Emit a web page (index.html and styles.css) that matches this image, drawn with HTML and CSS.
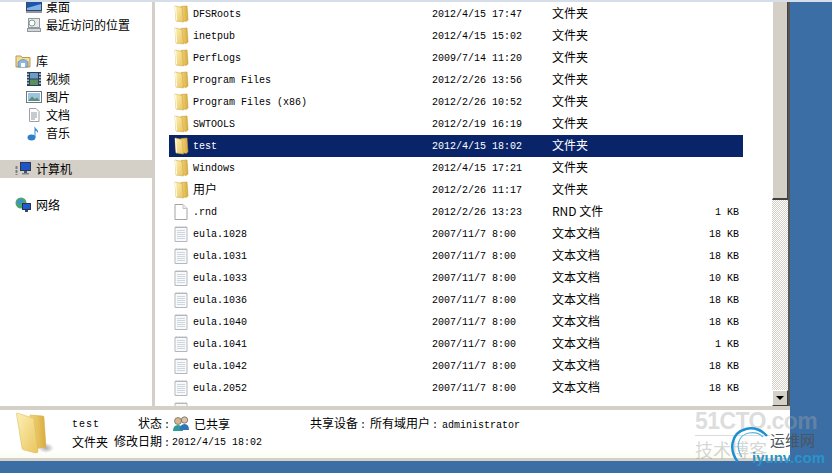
FILE: index.html
```html
<!DOCTYPE html>
<html lang="zh-CN">
<head>
<meta charset="utf-8">
<title>计算机</title>
<link rel="stylesheet" href="styles.css">
</head>
<body>
<svg class="defs" width="0" height="0">
  <defs>
    <linearGradient id="fb" x1="0" y1="0" x2="1" y2="0"><stop offset="0" stop-color="#f3d679"/><stop offset="1" stop-color="#d9ab3f"/></linearGradient>
    <linearGradient id="ff" x1="0" y1="0" x2="1" y2="1"><stop offset="0" stop-color="#fdf0b4"/><stop offset="1" stop-color="#e9c55f"/></linearGradient>
    <symbol id="folder" viewBox="0 0 16 18">
      <path d="M8 1.500 L14 1 L15 15 L13 16.500 L8 15z" fill="url(#fb)" stroke="#c49a38" stroke-width=".6"/>
      <path d="M2 1 L9 2.500 L10.500 17 L3 16z" fill="url(#ff)" stroke="#cfa94a" stroke-width=".6"/>
      <path d="M2.500 1.500 L3.500 15.500" stroke="#fffbe4" stroke-width="1.200"/>
    </symbol>
    <symbol id="blank" viewBox="0 0 16 18">
      <path d="M2 1.500 H10 L14 5.500 V16.500 H2z" fill="#fff" stroke="#a4a4a4"/>
      <path d="M10 1.500 V5.500 H14" fill="#eee" stroke="#c4c4c4"/>
    </symbol>
    <symbol id="doc" viewBox="0 0 16 18">
      <path d="M2 2.500 H14 V16.500 H2z" fill="#f8f9fb" stroke="#b4b8bc"/>
      <path d="M2 2.500 l1.500 -1.500 1.500 1.500 1.500 -1.500 1.500 1.500 1.500 -1.500 1.500 1.500 1.500 -1.500 1.500 1.500" fill="none" stroke="#b4b8bc" stroke-width=".7"/>
      <path d="M4 5.500 H12 M4 7.500 H12 M4 9.500 H12 M4 11.500 H12 M4 13.500 H12" stroke="#ced6e0"/>
    </symbol>
  </defs>
</svg>

<div class="screen">
  <div class="top-strip"></div>
  <div class="desk-row">
    <div class="window">
      <div class="panes">
        <nav class="sidebar">
          <div class="nav-group">
            <div class="nav-row child">
              <svg class="nav-icon" viewBox="0 0 16 16"><rect x="0.500" y="1.500" width="15" height="10" fill="#1f56a8" stroke="#39475c"/><path d="M1 9 L15 5 V11 H1z" fill="#7fb2e8"/><rect x="0" y="12" width="16" height="2" fill="#8d99a8"/></svg>
              <span>桌面</span>
            </div>
            <div class="nav-row child">
              <svg class="nav-icon" viewBox="0 0 16 16"><rect x="2.500" y="1.500" width="11" height="9" fill="#e8e8e8" stroke="#8f9aa0"/><circle cx="6" cy="6" r="3" fill="#fff" stroke="#7f9c8c"/><rect x="1.500" y="11.500" width="13" height="3" fill="#d4d8d8" stroke="#8f9aa0"/></svg>
              <span>最近访问的位置</span>
            </div>
          </div>
          <div class="nav-group">
            <div class="nav-row parent">
              <svg class="nav-icon" viewBox="0 0 16 16"><path d="M1 3 H6 L7 4.500 H15 V14 H1z" fill="#f3dc96" stroke="#b99b53"/><path d="M3 14 V9 Q8 4 13 9 V14z" fill="#8db8dc" stroke="#5d88ad" stroke-width=".7"/><rect x="6" y="10" width="4" height="4" fill="#fff"/></svg>
              <span>库</span>
            </div>
            <div class="nav-row child">
              <svg class="nav-icon" viewBox="0 0 16 16"><rect x="1" y="1" width="14" height="14" fill="#28405e"/><rect x="4" y="2" width="8" height="5.500" fill="#6d9cc9"/><rect x="4" y="8.500" width="8" height="5.500" fill="#5b8f5c"/><path d="M2 2.500 V14 M14 2.500 V14" stroke="#d8e2ea" stroke-width="1.500" stroke-dasharray="1.500 1.500"/></svg>
              <span>视频</span>
            </div>
            <div class="nav-row child">
              <svg class="nav-icon" viewBox="0 0 16 16"><rect x="0.500" y="2.500" width="15" height="11" fill="#fff" stroke="#66788a"/><rect x="2" y="4" width="12" height="8" fill="#9cc4de"/><path d="M2 12 L6 7.500 L9 10 L11 8.500 L14 12z" fill="#5f8f78"/></svg>
              <span>图片</span>
            </div>
            <div class="nav-row child">
              <svg class="nav-icon" viewBox="0 0 16 16"><path d="M3.500 1.500 H10 L13 4.500 V14.500 H3.500z" fill="#fff" stroke="#9aa0a6"/><path d="M5 6 H11 M5 8 H11 M5 10 H11 M5 12 H9" stroke="#8d96a0"/></svg>
              <span>文档</span>
            </div>
            <div class="nav-row child">
              <svg class="nav-icon" viewBox="0 0 16 16"><ellipse cx="5.500" cy="12.500" rx="4" ry="3" fill="#2f80c8"/><path d="M8.500 12 V1 C9.500 4 13 4.500 12 8.500 C11.500 6.500 10.500 6 9.500 6 V12z" fill="#3c8fd6"/></svg>
              <span>音乐</span>
            </div>
          </div>
          <div class="nav-group">
            <div class="nav-row parent selected">
              <svg class="nav-icon" viewBox="0 0 16 16"><rect x="5.500" y="1.500" width="10" height="8" fill="#1e55c8" stroke="#30394a"/><rect x="9" y="10" width="3" height="2" fill="#4a5566"/><rect x="7" y="12" width="7" height="1.500" fill="#7a8494"/><path d="M1.500 5 V14" stroke="#7a7f86" stroke-width="2" stroke-dasharray="3 1"/></svg>
              <span>计算机</span>
            </div>
          </div>
          <div class="nav-group">
            <div class="nav-row parent">
              <svg class="nav-icon" viewBox="0 0 16 16"><circle cx="6" cy="6" r="5.500" fill="#4ba66a"/><path d="M2 4 Q6 1 9 4 Q6 7 3 8z" fill="#3f8fd8"/><rect x="7.500" y="6.500" width="8" height="6" fill="#1f5ad0" stroke="#263548"/><rect x="10" y="13" width="3" height="2" fill="#39485c"/></svg>
              <span>网络</span>
            </div>
          </div>
        </nav>
        <div class="splitter"></div>
        <main class="files">
          <div class="file-row"><svg class="file-icon"><use href="#folder"/></svg><span class="name">DFSRoots</span><span class="date">2012/4/15 17:47</span><span class="type">文件夹</span><span class="size"></span></div>
          <div class="file-row"><svg class="file-icon"><use href="#folder"/></svg><span class="name">inetpub</span><span class="date">2012/4/15 15:02</span><span class="type">文件夹</span><span class="size"></span></div>
          <div class="file-row"><svg class="file-icon"><use href="#folder"/></svg><span class="name">PerfLogs</span><span class="date">2009/7/14 11:20</span><span class="type">文件夹</span><span class="size"></span></div>
          <div class="file-row"><svg class="file-icon"><use href="#folder"/></svg><span class="name">Program Files</span><span class="date">2012/2/26 13:56</span><span class="type">文件夹</span><span class="size"></span></div>
          <div class="file-row"><svg class="file-icon"><use href="#folder"/></svg><span class="name">Program Files (x86)</span><span class="date">2012/2/26 10:52</span><span class="type">文件夹</span><span class="size"></span></div>
          <div class="file-row"><svg class="file-icon"><use href="#folder"/></svg><span class="name">SWTOOLS</span><span class="date">2012/2/19 16:19</span><span class="type">文件夹</span><span class="size"></span></div>
          <div class="file-row selected"><svg class="file-icon"><use href="#folder"/></svg><span class="name">test</span><span class="date">2012/4/15 18:02</span><span class="type">文件夹</span><span class="size"></span></div>
          <div class="file-row"><svg class="file-icon"><use href="#folder"/></svg><span class="name">Windows</span><span class="date">2012/4/15 17:21</span><span class="type">文件夹</span><span class="size"></span></div>
          <div class="file-row"><svg class="file-icon"><use href="#folder"/></svg><span class="name cjk">用户</span><span class="date">2012/2/26 11:17</span><span class="type">文件夹</span><span class="size"></span></div>
          <div class="file-row"><svg class="file-icon"><use href="#blank"/></svg><span class="name">.rnd</span><span class="date">2012/2/26 13:23</span><span class="type">RND 文件</span><span class="size">1 KB</span></div>
          <div class="file-row"><svg class="file-icon"><use href="#doc"/></svg><span class="name">eula.1028</span><span class="date">2007/11/7 8:00</span><span class="type">文本文档</span><span class="size">18 KB</span></div>
          <div class="file-row"><svg class="file-icon"><use href="#doc"/></svg><span class="name">eula.1031</span><span class="date">2007/11/7 8:00</span><span class="type">文本文档</span><span class="size">18 KB</span></div>
          <div class="file-row"><svg class="file-icon"><use href="#doc"/></svg><span class="name">eula.1033</span><span class="date">2007/11/7 8:00</span><span class="type">文本文档</span><span class="size">10 KB</span></div>
          <div class="file-row"><svg class="file-icon"><use href="#doc"/></svg><span class="name">eula.1036</span><span class="date">2007/11/7 8:00</span><span class="type">文本文档</span><span class="size">18 KB</span></div>
          <div class="file-row"><svg class="file-icon"><use href="#doc"/></svg><span class="name">eula.1040</span><span class="date">2007/11/7 8:00</span><span class="type">文本文档</span><span class="size">18 KB</span></div>
          <div class="file-row"><svg class="file-icon"><use href="#doc"/></svg><span class="name">eula.1041</span><span class="date">2007/11/7 8:00</span><span class="type">文本文档</span><span class="size">1 KB</span></div>
          <div class="file-row"><svg class="file-icon"><use href="#doc"/></svg><span class="name">eula.1042</span><span class="date">2007/11/7 8:00</span><span class="type">文本文档</span><span class="size">18 KB</span></div>
          <div class="file-row"><svg class="file-icon"><use href="#doc"/></svg><span class="name">eula.2052</span><span class="date">2007/11/7 8:00</span><span class="type">文本文档</span><span class="size">18 KB</span></div>
          <div class="file-row"><svg class="file-icon"><use href="#doc"/></svg></div>
        </main>
        <div class="scrollbar">
          <div class="thumb"></div>
          <div class="track"></div>
          <div class="scroll-btn"><span class="arrow"></span></div>
        </div>
      </div>
      <div class="band"></div>
      <footer class="status">
        <svg class="status-folder" viewBox="0 0 38 42">
          <defs><radialGradient id="sh"><stop offset="0" stop-color="#8a8a8a" stop-opacity=".7"/><stop offset="1" stop-color="#8a8a8a" stop-opacity="0"/></radialGradient></defs>
          <ellipse cx="30" cy="36" rx="8" ry="5" fill="url(#sh)"/>
          <path d="M14 3 L27 4 Q28 4 28 6 L30 35 L18 37z" fill="url(#fb)" stroke="#d0a94c" stroke-width=".5"/>
          <path d="M1 1 L17 6 Q18 6 18 8 L22 39 Q22 41 20 41 L8 38 Q6 37.500 6 36 L0.500 2 Q0.500 1 1 1z" fill="url(#ff)" stroke="#d5b35a" stroke-width=".5"/>
        </svg>
        <div class="details">
          <span class="test-name">test</span>
          <span class="label">状态<span class="colon">:</span></span>
          <span class="value">
            <svg class="share-icon" viewBox="0 0 18 16"><circle cx="6" cy="5" r="3.500" fill="#d9b48f" stroke="#5b6b57" stroke-width=".7"/><path d="M1 15 Q1 9 6 9 Q11 9 11 15z" fill="#2f9a9a"/><circle cx="12.500" cy="4" r="3.200" fill="#e3c09c" stroke="#4d5d6c" stroke-width=".7"/><path d="M8 14 Q8 8 12.500 8 Q17 8 17 14z" fill="#2f74b8"/></svg>
            已共享
          </span>
          <span class="shared">共享设备<span class="colon wide">:</span>所有域用户<span class="colon wide">:</span><span class="mono">administrator</span></span>
          <span>文件夹</span>
          <span class="label">修改日期<span class="colon">:</span></span>
          <span class="mono">2012/4/15 18:02</span>
        </div>
      </footer>
      <div class="bottom-edge"></div>
    </div>
    <div class="desktop"></div>
  </div>
  <div class="watermark">
    <span class="wm-51">51CTO.com</span>
    <span class="wm-rule"></span>
    <span class="wm-blog">技术博客</span>
    <svg class="wm-swoosh" viewBox="0 0 38 36"><path d="M8 35 C-1 24 0 6 16 2 C24 0 32 3 37 9" fill="none" stroke="#1d8fd0" stroke-width="2.500"/><path d="M12 30 C5 20 8 8 19 6 C25 5 30 7 33 10" fill="none" stroke="#5ab6e4" stroke-width="1.200"/></svg>
    <span class="wm-yun">运维网</span>
    <span class="wm-iyunv">iyunv.com</span>
  </div>
</div>
</body>
</html>
```

FILE: styles.css
```css
* { box-sizing: border-box; }

html, body {
  margin: 0;
  padding: 0;
  height: 473px;
  overflow: hidden;
}

body {
  font: 12px/1 "Noto Sans CJK SC", "Liberation Sans", sans-serif;
  color: #000;
}

.defs { position: absolute; }

.screen {
  position: relative;
  display: flex;
  flex-direction: column;
  width: 832px;
  height: 473px;
  background: #3a6ea5;
}

.top-strip {
  height: 2px;
  flex: none;
  background: #d6deea;
}

.desk-row {
  display: flex;
  flex: 1;
  min-height: 0;
}

.window {
  display: flex;
  flex-direction: column;
  width: 790px;
  flex: none;
}

.panes {
  display: flex;
  height: 404px;
  flex: none;
  background: #fff;
  overflow: hidden;
}

.sidebar {
  display: flex;
  flex-direction: column;
  gap: 18px;
  width: 152px;
  margin-top: -4px;
  flex: none;
}

.nav-row {
  display: flex;
  align-items: center;
  height: 18px;
}

.nav-row.child { padding-left: 26px; gap: 4px; }
.nav-row.parent { padding-left: 15px; gap: 5px; }
.nav-row.selected { background: #d4d0c8; }

.nav-icon {
  width: 16px;
  height: 16px;
  flex: none;
}

.splitter {
  width: 3px;
  flex: none;
  background: #d4d0c8;
}

.files {
  width: 617px;
  flex: none;
  padding: 1px 0 0 14px;
  font: 10px/22px "Liberation Mono", "Noto Sans CJK SC", monospace;
}

.file-row {
  display: grid;
  grid-template-columns: 24px 239px 120px 1fr 60px;
  align-items: center;
  width: 574px;
  height: 22px;
}

.file-row.selected {
  background: #0a246a;
  color: #fff;
}

.file-icon {
  width: 16px;
  height: 18px;
  margin-left: 4px;
}

.name, .date, .size {
  height: 22px;
  padding-top: 1px;
}

.type, .name.cjk {
  height: 22px;
  padding-top: 0;
  font: 12px/20px "Noto Sans CJK SC", "Liberation Mono", sans-serif;
}

.size {
  text-align: right;
  padding-right: 4px;
}

.scrollbar {
  display: flex;
  flex-direction: column;
  width: 18px;
  flex: none;
  border-right: 2px solid #555;
}

.thumb {
  height: 198px;
  background: #d4d0c8;
  border-left: 1px solid #fff;
  border-right: 1px solid #404040;
  border-bottom: 2px solid #404040;
}

.track {
  flex: 1;
  background: conic-gradient(#d4d0c8 25%, #fff 0 50%, #d4d0c8 0 75%, #fff 0) 0 0 / 2px 2px;
}

.scroll-btn {
  display: flex;
  align-items: center;
  justify-content: center;
  height: 16px;
  background: #d4d0c8;
  border-top: 1px solid #fff;
  border-left: 1px solid #fff;
  border-right: 1px solid #404040;
  border-bottom: 1px solid #404040;
}

.arrow {
  width: 0;
  height: 0;
  border-left: 4px solid transparent;
  border-right: 4px solid transparent;
  border-top: 4px solid #000;
}

.band {
  height: 4px;
  flex: none;
  background: #d4d0c8;
}

.status {
  display: flex;
  height: 48px;
  flex: none;
  padding: 2px 0 0 16px;
  background: linear-gradient(#fff 80%, #fcfcf2);
}

.status-folder {
  width: 38px;
  height: 42px;
  flex: none;
}

.details {
  display: grid;
  grid-template-columns: 42px 58px 138px auto;
  grid-auto-rows: 18px;
  align-items: center;
  margin: 3px 0 0 18px;
}

.test-name {
  font: 10px "Liberation Mono", monospace;
  letter-spacing: 1px;
}

.label { text-align: right; }

.colon {
  display: inline-block;
  width: 10px;
  padding-left: 2px;
  text-align: left;
  font: 10px "Liberation Mono", monospace;
}

.colon.wide { width: 12px; }

.value {
  display: flex;
  align-items: center;
  gap: 4px;
}

.share-icon {
  width: 18px;
  height: 16px;
}

.shared {
  white-space: nowrap;
}

.mono {
  font: 10px "Liberation Mono", monospace;
}

.bottom-edge {
  height: 3px;
  flex: none;
  background: #d4d0c8;
}

.desktop {
  flex: 1;
}

.watermark {
  position: absolute;
  left: 690px;
  top: 405px;
  width: 142px;
  height: 68px;
  overflow: hidden;
}

.wm-51 {
  position: absolute;
  left: 5px;
  top: 3px;
  font: bold 23px/26px "Liberation Sans", sans-serif;
  letter-spacing: -0.6px;
  color: rgba(165, 165, 165, .4);
  white-space: nowrap;
}

.wm-rule {
  position: absolute;
  left: 5px;
  top: 30px;
  width: 75px;
  height: 1px;
  background: rgba(165, 165, 165, .4);
}

.wm-blog {
  position: absolute;
  left: 5px;
  top: 35px;
  font: 18px/19px "Noto Sans CJK SC", sans-serif;
  color: rgba(150, 150, 150, .4);
  white-space: nowrap;
}

.wm-swoosh {
  position: absolute;
  left: 40px;
  top: 22px;
  width: 38px;
  height: 36px;
}

.wm-yun {
  position: absolute;
  left: 80px;
  top: 27px;
  font: 15px/15px "Noto Sans CJK SC", sans-serif;
  color: #4a5560;
  white-space: nowrap;
}

.wm-iyunv {
  position: absolute;
  left: 62px;
  top: 45px;
  font: bold 15px/15px "Liberation Sans", sans-serif;
  color: #2a93c8;
  white-space: nowrap;
}
```
